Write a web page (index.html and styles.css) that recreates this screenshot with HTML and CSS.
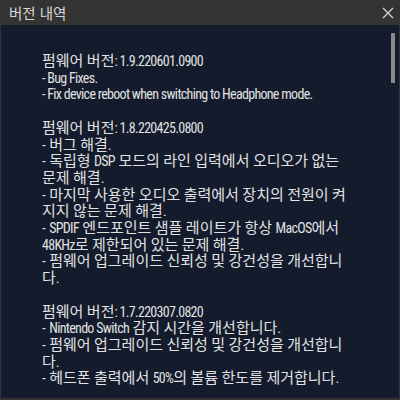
FILE: index.html
```html
<!DOCTYPE html>
<html lang="ko">
<head>
    <meta charset="UTF-8">
    <title>버전 내역</title>
    <link rel="stylesheet" href="styles.css">
</head>
<body>

    <div class="window">
        <div class="title-bar">
            <span class="title">버전 내역</span>
            <svg class="close" width="12" height="12" viewBox="0 0 12 12">
                <path d="M1 1 L11 11 M11 1 L1 11" stroke="#d6d6d6" stroke-width="1.3" fill="none"/>
            </svg>
        </div>

        <div class="content">
            <div class="notes">
                <p>펌웨어 버전<span class="en">: 1.9.220601.0900</span><br>
                <span class="en">- Bug Fixes.</span><br>
                <span class="en">- Fix device reboot when switching to Headphone mode.</span></p>

                <p>펌웨어 버전<span class="en">: 1.8.220425.0800</span><br>
                - 버그 해결.<br>
                - 독립형 <span class="en">DSP</span> 모드의 라인 입력에서 오디오가 없는 문제 해결.<br>
                - 마지막 사용한 오디오 출력에서 장치의 전원이 켜지지 않는 문제 해결.<br>
                - <span class="en">SPDIF</span> 엔드포인트 샘플 레이트가 항상 <span class="en">MacOS</span>에서 <span class="en">48KHz</span>로 제한되어 있는 문제 해결.<br>
                - 펌웨어 업그레이드 신뢰성 및 강건성을 개선합니다.</p>

                <p>펌웨어 버전<span class="en">: 1.7.220307.0820</span><br>
                - <span class="en">Nintendo Switch</span> 감지 시간을 개선합니다.<br>
                - 펌웨어 업그레이드 신뢰성 및 강건성을 개선합니다.<br>
                - 헤드폰 출력에서 <span class="en">50%</span>의 볼륨 한도를 제거합니다.</p>
            </div>
            <div class="scroll-thumb"></div>
        </div>
    </div>

</body>
</html>
```

FILE: styles.css
```css
body {
    margin: 0;
    background-color: #333333;
    font-family: "Roboto Condensed", "Noto Sans CJK KR", sans-serif;
}
.window {
    width: 400px;
    height: 400px;
    display: flex;
    flex-direction: column;
}
.title-bar {
    height: 25px;
    display: flex;
    align-items: center;
    justify-content: space-between;
    padding: 0 6px 0 9px;
}
.title {
    font-family: "Noto Sans CJK KR", sans-serif;
    font-size: 14.5px;
    color: #d8d8d8;
}
.close {
    display: block;
}
.content {
    position: relative;
    flex: 1;
    margin: 0 1px 2px;
    background-color: #131b2c;
    overflow: hidden;
}
.notes {
    width: 308px;
    padding: 28px 0 0 41px;
    font-size: 15px;
    line-height: 16.7px;
    color: #e2e2e2;
}
.notes p {
    margin: 0 0 16.7px;
}
.en {
    font-size: 14px;
    line-height: 12px;
    letter-spacing: -0.7px;
}
.scroll-thumb {
    position: absolute;
    top: 8px;
    right: 4px;
    width: 4px;
    height: 50px;
    background-color: #8a8a8a;
    border-radius: 1px 1px 0 0;
}
```
